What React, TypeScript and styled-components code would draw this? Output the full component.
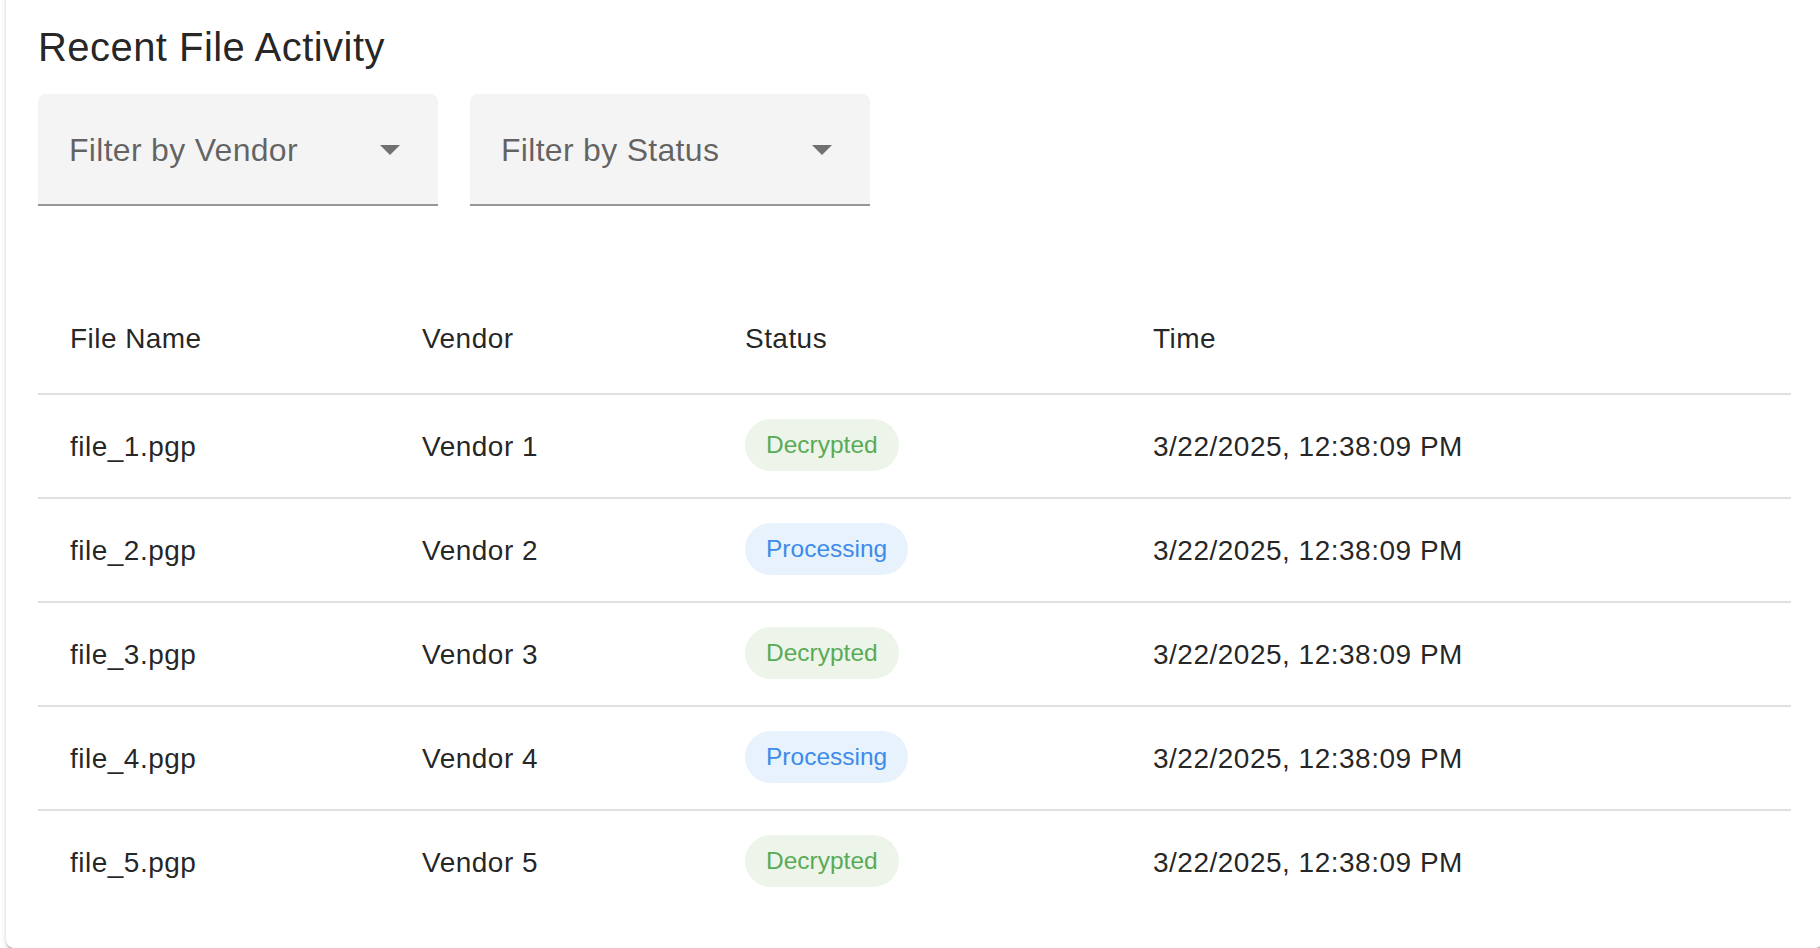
import React from "react";
import styled, { createGlobalStyle } from "styled-components";

const GlobalStyle = createGlobalStyle`
  html, body {
    margin: 0;
    padding: 0;
    overflow: hidden;
    background: #ffffff;
    font-family: "Liberation Sans", Arial, Helvetica, sans-serif;
  }
  * { box-sizing: border-box; }
`;

const Page = styled.div`
  padding-left: 6px;
`;

const Card = styled.section`
  margin-top: -17px;
  width: 1817px;
  padding: 32px 32px 35px;
  background: #ffffff;
  border-radius: 8px;
  box-shadow: 0 4px 2px -2px rgba(0, 0, 0, 0.2), 0 2px 2px 0 rgba(0, 0, 0, 0.14),
    0 2px 6px 0 rgba(0, 0, 0, 0.12);
`;

const Title = styled.h2`
  margin: 0 0 15px;
  font-size: 40px;
  line-height: 64px;
  font-weight: 400;
  letter-spacing: 0.45px;
  color: rgba(0, 0, 0, 0.87);
`;

const FilterRow = styled.div`
  display: flex;
  gap: 32px;
  margin-bottom: 75px;
`;

const FilterBox = styled.div`
  width: 400px;
  height: 112px;
  display: flex;
  align-items: center;
  justify-content: space-between;
  padding: 2px 24px 0 31px;
  background: #f4f4f4;
  border-radius: 8px 8px 0 0;
  border-bottom: 2px solid rgba(0, 0, 0, 0.38);
  cursor: pointer;
`;

const FilterLabel = styled.span`
  font-size: 32px;
  line-height: 1;
  letter-spacing: 0.3px;
  color: rgba(0, 0, 0, 0.6);
`;

const Arrow = styled.svg`
  width: 48px;
  height: 48px;
  margin-top: -2px;
  fill: rgba(0, 0, 0, 0.54);
  flex: none;
`;

const Table = styled.table`
  width: 100%;
  border-collapse: collapse;
  table-layout: fixed;
`;

const HeadCell = styled.th<{ $w?: number }>`
  ${(p) => (p.$w ? `width: ${p.$w}px;` : "")}
  text-align: left;
  font-weight: 400;
  font-size: 28px;
  line-height: 48px;
  letter-spacing: 0.45px;
  padding: 34px 32px 30px;
  color: rgba(0, 0, 0, 0.87);
  border-bottom: 2px solid #e0e0e0;
`;

const BodyRow = styled.tr`
  &:last-child td {
    border-bottom: none;
  }
`;

const Cell = styled.td<{ $chip?: boolean }>`
  font-size: 28px;
  line-height: 40px;
  letter-spacing: 0.5px;
  padding: ${(p) => (p.$chip ? "24px 32px 26px" : "26px 32px 24px")};
  color: rgba(0, 0, 0, 0.87);
  border-bottom: 2px solid #e0e0e0;
  vertical-align: middle;
`;

const Chip = styled.span<{ $tone: "success" | "info" }>`
  display: inline-flex;
  align-items: center;
  height: 52px;
  padding: 0 21px;
  border-radius: 26px;
  font-size: 24.5px;
  line-height: 1;
  letter-spacing: 0;
  background: ${(p) => (p.$tone === "success" ? "#edf5eb" : "#e8f2fd")};
  color: ${(p) => (p.$tone === "success" ? "#5aab56" : "#3d8bea")};
`;

const files = [1, 2, 3, 4, 5].map((n) => ({
  name: `file_${n}.pgp`,
  vendor: `Vendor ${n}`,
  status: n % 2 === 1 ? "Decrypted" : "Processing",
  time: "3/22/2025, 12:38:09 PM",
}));

const DropArrow = () => (
  <Arrow viewBox="0 0 24 24" aria-hidden="true">
    <path d="M7 10l5 5 5-5z" />
  </Arrow>
);

export default function App() {
  return (
    <>
      <GlobalStyle />
      <Page>
        <Card>
          <Title>Recent File Activity</Title>
          <FilterRow>
            <FilterBox>
              <FilterLabel>Filter by Vendor</FilterLabel>
              <DropArrow />
            </FilterBox>
            <FilterBox>
              <FilterLabel>Filter by Status</FilterLabel>
              <DropArrow />
            </FilterBox>
          </FilterRow>
          <Table>
            <thead>
              <tr>
                <HeadCell $w={352}>File Name</HeadCell>
                <HeadCell $w={323}>Vendor</HeadCell>
                <HeadCell $w={408}>Status</HeadCell>
                <HeadCell>Time</HeadCell>
              </tr>
            </thead>
            <tbody>
              {files.map((f) => (
                <BodyRow key={f.name}>
                  <Cell>{f.name}</Cell>
                  <Cell>{f.vendor}</Cell>
                  <Cell $chip>
                    <Chip $tone={f.status === "Decrypted" ? "success" : "info"}>
                      {f.status}
                    </Chip>
                  </Cell>
                  <Cell>{f.time}</Cell>
                </BodyRow>
              ))}
            </tbody>
          </Table>
        </Card>
      </Page>
    </>
  );
}
